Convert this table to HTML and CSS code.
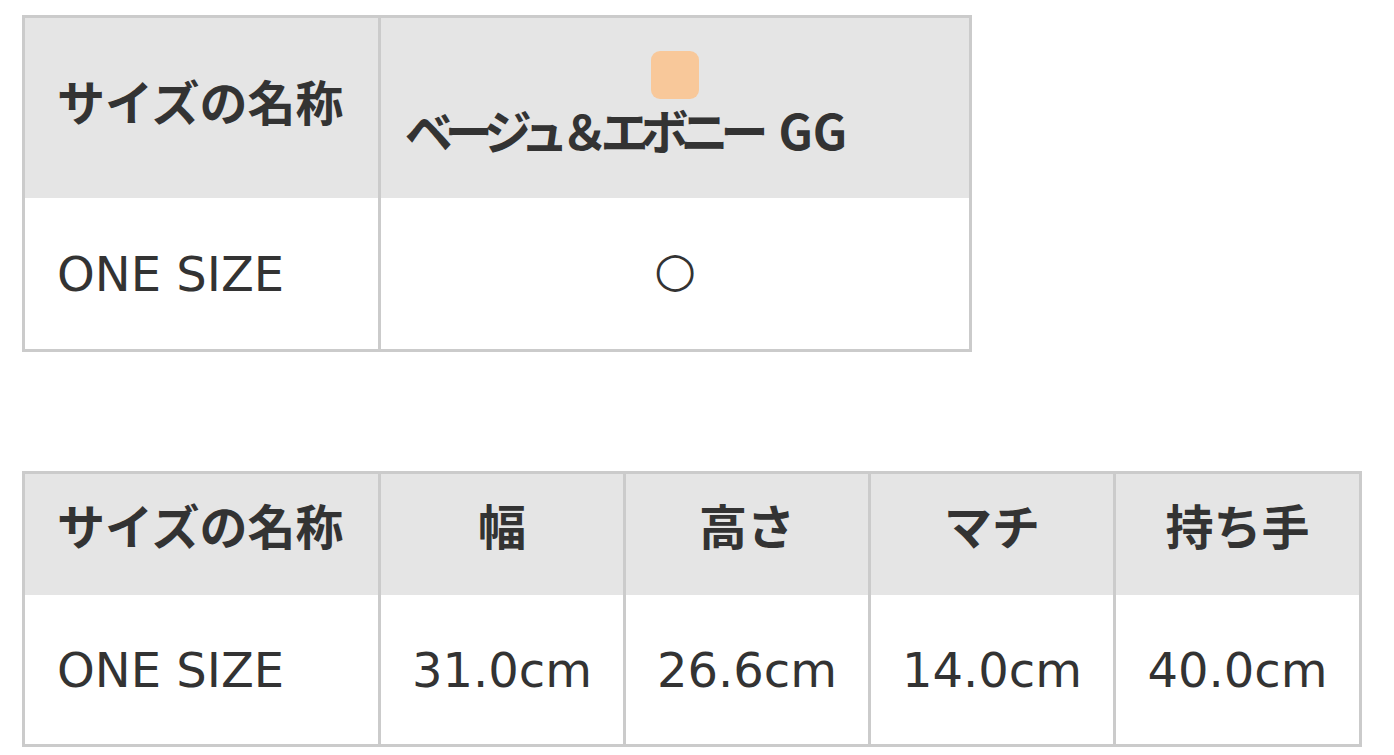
FILE: index.html
```html
<!DOCTYPE html>
<html lang="ja">
<head>
<meta charset="utf-8">
<title>サイズ表</title>
<link rel="stylesheet" href="styles.css">
</head>
<body>
<table class="size-table stock">
  <thead>
    <tr>
      <th class="name-col">サイズの名称</th>
      <th class="color-col">
        <span class="swatch"></span>
        <span class="color-name"><span class="kana">ベージュ＆エボニー</span> <span class="latin">GG</span></span>
      </th>
    </tr>
  </thead>
  <tbody>
    <tr>
      <td class="name-col">ONE SIZE</td>
      <td class="mark">○</td>
    </tr>
  </tbody>
</table>

<table class="size-table dims">
  <thead>
    <tr>
      <th class="name-col">サイズの名称</th>
      <th class="dim-col">幅</th>
      <th class="dim-col">高さ</th>
      <th class="dim-col">マチ</th>
      <th class="dim-col last">持ち手</th>
    </tr>
  </thead>
  <tbody>
    <tr>
      <td class="name-col">ONE SIZE</td>
      <td>31.0cm</td>
      <td>26.6cm</td>
      <td>14.0cm</td>
      <td>40.0cm</td>
    </tr>
  </tbody>
</table>
</body>
</html>
```
FILE: styles.css
```css
html, body {
  margin: 0;
  background: #ffffff;
}
body {
  padding: 15px 22px;
  color: #333333;
  font-family: "DejaVu Sans", "Noto Sans CJK JP", sans-serif;
  font-size: 48px;
}
.size-table {
  border-collapse: separate;
  border-spacing: 0;
  border: 3px solid #cbcbcb;
  table-layout: fixed;
}
.size-table th,
.size-table td {
  box-sizing: border-box;
  padding: 0;
  border-left: 3px solid #cbcbcb;
  text-align: center;
  vertical-align: middle;
  line-height: 72px;
}
.size-table th.name-col,
.size-table td.name-col {
  border-left: none;
  width: 353px;
  text-align: left;
  padding-left: 32px;
}
.size-table th {
  background: #e5e5e5;
  font-family: "Noto Sans CJK JP", sans-serif;
  font-weight: 700;
  padding-bottom: 16px;
}
.size-table td {
  font-weight: 400;
}
.size-table td.mark {
  padding-bottom: 10px;
}
.stock {
  width: 950px;
}
.stock thead th {
  height: 180px;
}
.stock thead th.color-col {
  padding-bottom: 6px;
}
.stock tbody td {
  height: 151px;
}
.color-col {
  width: 591px;
}
.swatch {
  display: block;
  width: 48px;
  height: 48px;
  margin: 0 auto;
  border-radius: 9px;
  background: #f8c89a;
}
.color-name {
  display: block;
  line-height: 60px;
  padding-right: 98px;
}
.kana {
  letter-spacing: -8px;
}
.latin {
  margin-left: 7px;
}
.dims {
  width: 1340px;
  margin-top: 119px;
}
.dims thead th {
  height: 121px;
  padding-bottom: 22px;
}
.dims tbody td {
  height: 149px;
}
.dim-col {
  width: 245px;
}
.dim-col.last {
  width: 246px;
}
```
